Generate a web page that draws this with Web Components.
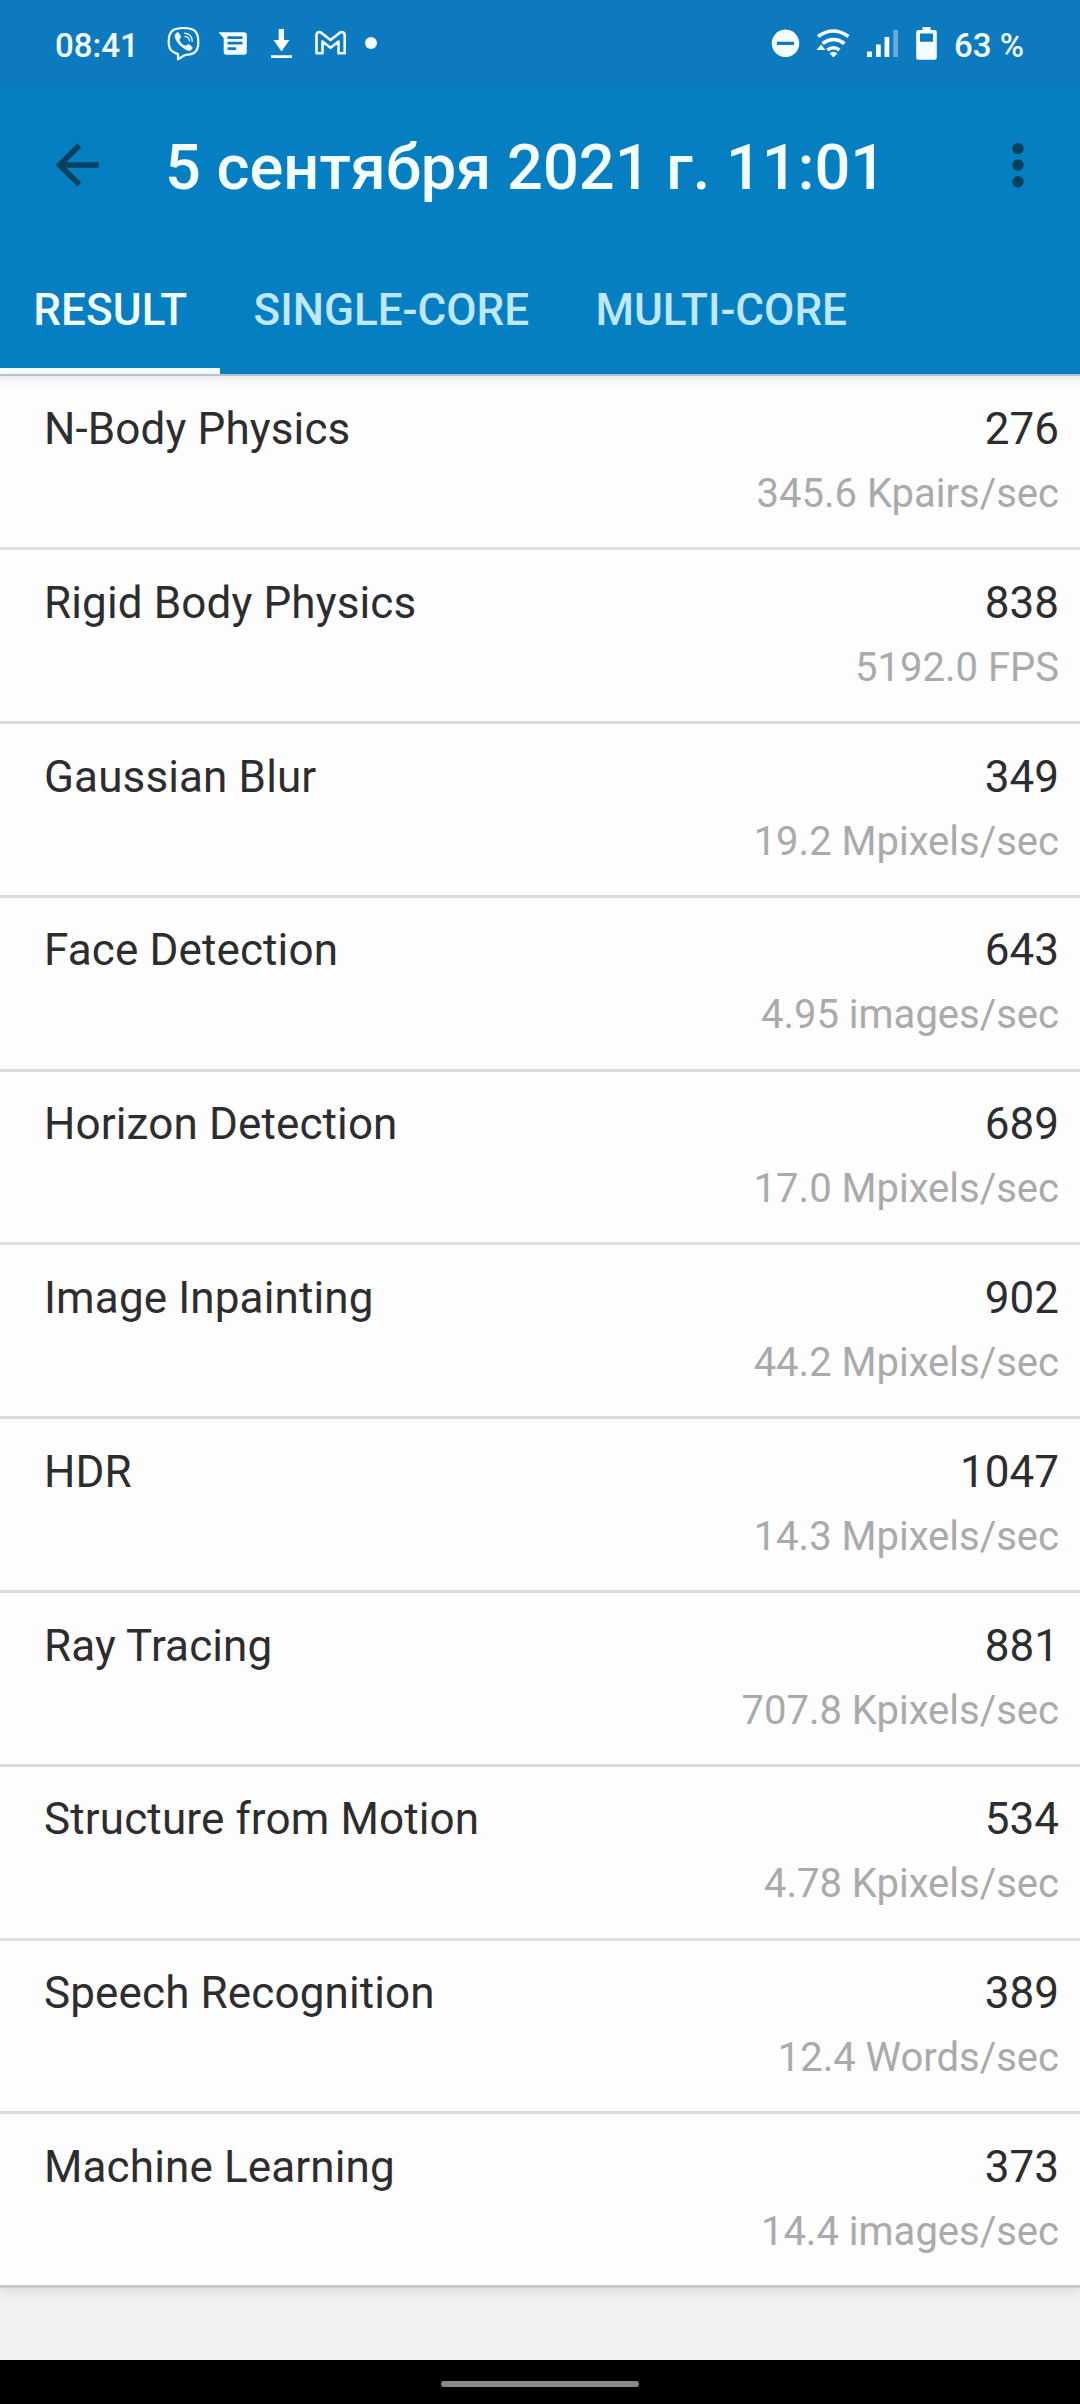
<!DOCTYPE html>
<html lang="ru"><head><meta charset="utf-8"><title>Geekbench</title>
<style>
html,body{margin:0;padding:0}
body{width:1080px;height:2404px;overflow:hidden;font-family:Roboto,sans-serif;background:#f1f1f1}
</style></head><body>
<bench-app></bench-app>
<script>
const define=(name,html,init)=>customElements.define(name,class extends HTMLElement{
  constructor(){super();this.attachShadow({mode:'open'}).innerHTML=html;}
  connectedCallback(){if(init)init(this,this.shadowRoot);}
});

define('status-bar',`<style>
:host{display:flex;height:88px;background:#0d7abf;color:#f4fdff;box-sizing:border-box;padding:0 56px 2px 55px;align-items:center;font:500 33px/40px Roboto,sans-serif}
svg{display:block;flex:none}
.l{margin-left:26.500px}
.r{margin-left:auto;margin-right:16px}
span{white-space:nowrap;padding-top:5px}
</style>
<span>08:41</span>
<svg class="l" width="215" height="40" viewBox="165 23 215 40" fill="#f4fdff">
 <g fill="none" stroke="#f4fdff" stroke-width="2.2" stroke-linecap="round" stroke-linejoin="round">
  <path d="M183.500 28C194 28 198.300 31 198.300 42C198.300 52 194 54.600 185 55L178 59.300V54C171 52 168.700 49 168.700 42C168.700 31 173 28 183.500 28Z"/>
  <path d="M184.500 33.200c4.500.3 7.500 3.300 7.700 8M185 36.300c2.600.3 4.300 2 4.500 4.600" stroke-width="1.300"/>
 </g>
 <path d="M177 32.500c1-.5 2 0 3.800 3.500.8 1.600-1.800 2.700-1.200 4.200 1 2.600 2.800 4.500 5.400 5.400 1.600.5 2.300-2 4-1.200 3.600 2.200 4 3 3.300 4.100-1.300 2.200-3 2.800-5 1.900-6-2.900-10.300-7-12.500-12.800-.8-2 .4-4 2.200-5.100Z"/>
 <path fill-rule="evenodd" d="M218.500 32.300H244q2.800 0 2.800 2.800V52q0 2.800-2.800 2.800H226.500q-2.800 0-2.800-2.800V38ZM227.500 36.300v2.700h15v-2.700ZM227.500 41.700v2.700h15v-2.700ZM227.500 47.300v2.700h8.500v-2.700Z"/>
 <path d="M278.700 29h5.300v11h5.500L281.500 51.500 273.500 40h5.200ZM271 55.200h21v2.900h-21Z"/>
 <path d="M316.500 53.300V35.500C316.500 31.500 320 31.500 321.500 33L330.500 40 339.500 33C341 31.500 344.700 31.500 344.700 35.500V53.300H338.500V41.500L330.500 47.700 322.500 41.500V53.300Z" fill="none" stroke="#f4fdff" stroke-width="2.600" stroke-linejoin="round"/>
 <circle cx="371" cy="43" r="6"/>
</svg>
<svg class="r" width="168" height="40" viewBox="771 23 168 40" fill="#f4fdff">
 <path fill-rule="evenodd" d="M786.500 29.500a13.800 13.800 0 1 0 .01 0ZM778 41.800h17v3.200h-17Z"/>
 <g fill="none" stroke="#f4fdff" stroke-width="3.600"><path d="M819 36.500Q834.500 25.500 849.500 36.500M823.500 43.500Q834.500 35.500 845.500 43.500M828.300 50Q834.500 45.500 840.500 50" /></g>
 <path d="M834.500 57.500l-4-4.200q4-3.300 8 0ZM822 44.500l4.500 5.500h-9Z"/>
 <path d="M868 51.500h5v5.500h-5ZM877 44.500h4.800V57H877ZM885.500 37h4.800v20h-4.800Z"/>
 <path d="M894.300 30h4.700v27h-4.700Z" opacity=".4"/>
 <path fill-rule="evenodd" d="M923.500 27h8v3h4q2.300 0 2.300 2.300V57.500q0 2.300-2.300 2.300H919.500q-2.300 0-2.300-2.300V32.300q0-2.300 2.300-2.300h4ZM921 33.500v8.300h13v-8.300Z"/>
</svg>
<span>63 %</span>`);

define('app-bar',`<style>
:host{display:flex;height:156px;align-items:center;background:#057fc1;color:#f4feff;padding:0 35px 2px 54px;box-sizing:border-box}
svg{display:block;flex:none}
h1{margin:0 0 0 65px;padding-top:4px;font:500 63.150px/76px Roboto,sans-serif;white-space:nowrap;flex:1}
</style>
<svg width="46" height="46" viewBox="54 142 46 46" fill="none" stroke="#05405f" stroke-width="5.500"><path d="M98.800 165H60M79.300 145.500L59.500 165l19.800 19.500"/></svg>
<h1><slot></slot></h1>
<svg width="54" height="50" viewBox="992 140 54 50" fill="#05405f"><circle cx="1019" cy="148.500" r="5.700"/><circle cx="1019" cy="165" r="5.700"/><circle cx="1019" cy="181.700" r="5.700"/></svg>`);

define('tab-item',`<style>
:host{display:flex;flex-direction:column;justify-content:space-between;padding:40px 33.200px 0;color:#bfe7ff;font:500 44px/52px Roboto,sans-serif;white-space:nowrap;box-sizing:border-box;height:130px}
i{display:block;height:6px;margin:0 -33.200px}
:host([active]){color:#f2fdff;letter-spacing:.14px}
:host([active]) i{background:#f4ffff}
</style><span><slot></slot></span><i></i>`);

define('tab-bar',`<style>:host{display:flex;height:130px;background:#057fc1}</style><slot></slot>`);

define('result-row',`<style>
:host{display:flex;justify-content:space-between;align-items:flex-start;height:173.800px;box-sizing:border-box;border-bottom:3px solid #dcdcdc;padding:24.500px 21px 0 44px;color:#2d2d2f;font:400 44px/56px Roboto,sans-serif;white-space:nowrap}
:host(:last-child){border-bottom-color:#cacaca}
.n{letter-spacing:.13px}
.v{display:flex;flex-direction:column;align-items:flex-end}
.u{color:#aaa;font-size:40px;line-height:60px;margin-top:7px}
</style><span class="n"></span><div class="v"><span class="s"></span><span class="u"></span></div>`,(el,r)=>{
 r.querySelector('.n').textContent=el.getAttribute('name');
 r.querySelector('.s').textContent=el.getAttribute('score');
 r.querySelector('.u').textContent=el.getAttribute('rate');
});

define('result-list',`<style>
:host{display:block;background:linear-gradient(#b9c3cb 0 2px,#eee 2px,#f8f8f8 8px,#fdfdfd 15px);padding-top:2.500px;box-shadow:0 4px 12px rgba(0,0,0,.09)}
</style><slot></slot>`);

define('gesture-bar',`<style>
:host{display:flex;height:44px;background:#000;justify-content:center;align-items:center;margin-top:auto}
div{width:198px;height:6px;border-radius:3px;background:#8a8a8a;margin-bottom:-4px}
</style><div></div>`);

define('bench-app',`<style>
:host{display:flex;flex-direction:column;height:2404px;background:#f1f1f1;overflow:hidden}
</style>
<status-bar></status-bar>
<app-bar>5 сентября 2021 г. 11:01</app-bar>
<tab-bar><tab-item active>RESULT</tab-item><tab-item>SINGLE-CORE</tab-item><tab-item>MULTI-CORE</tab-item></tab-bar>
<result-list>
<result-row name="N-Body Physics" score="276" rate="345.6 Kpairs/sec"></result-row>
<result-row name="Rigid Body Physics" score="838" rate="5192.0 FPS"></result-row>
<result-row name="Gaussian Blur" score="349" rate="19.2 Mpixels/sec"></result-row>
<result-row name="Face Detection" score="643" rate="4.95 images/sec"></result-row>
<result-row name="Horizon Detection" score="689" rate="17.0 Mpixels/sec"></result-row>
<result-row name="Image Inpainting" score="902" rate="44.2 Mpixels/sec"></result-row>
<result-row name="HDR" score="1047" rate="14.3 Mpixels/sec"></result-row>
<result-row name="Ray Tracing" score="881" rate="707.8 Kpixels/sec"></result-row>
<result-row name="Structure from Motion" score="534" rate="4.78 Kpixels/sec"></result-row>
<result-row name="Speech Recognition" score="389" rate="12.4 Words/sec"></result-row>
<result-row name="Machine Learning" score="373" rate="14.4 images/sec"></result-row>
</result-list>
<gesture-bar></gesture-bar>`);
</script></body></html>
